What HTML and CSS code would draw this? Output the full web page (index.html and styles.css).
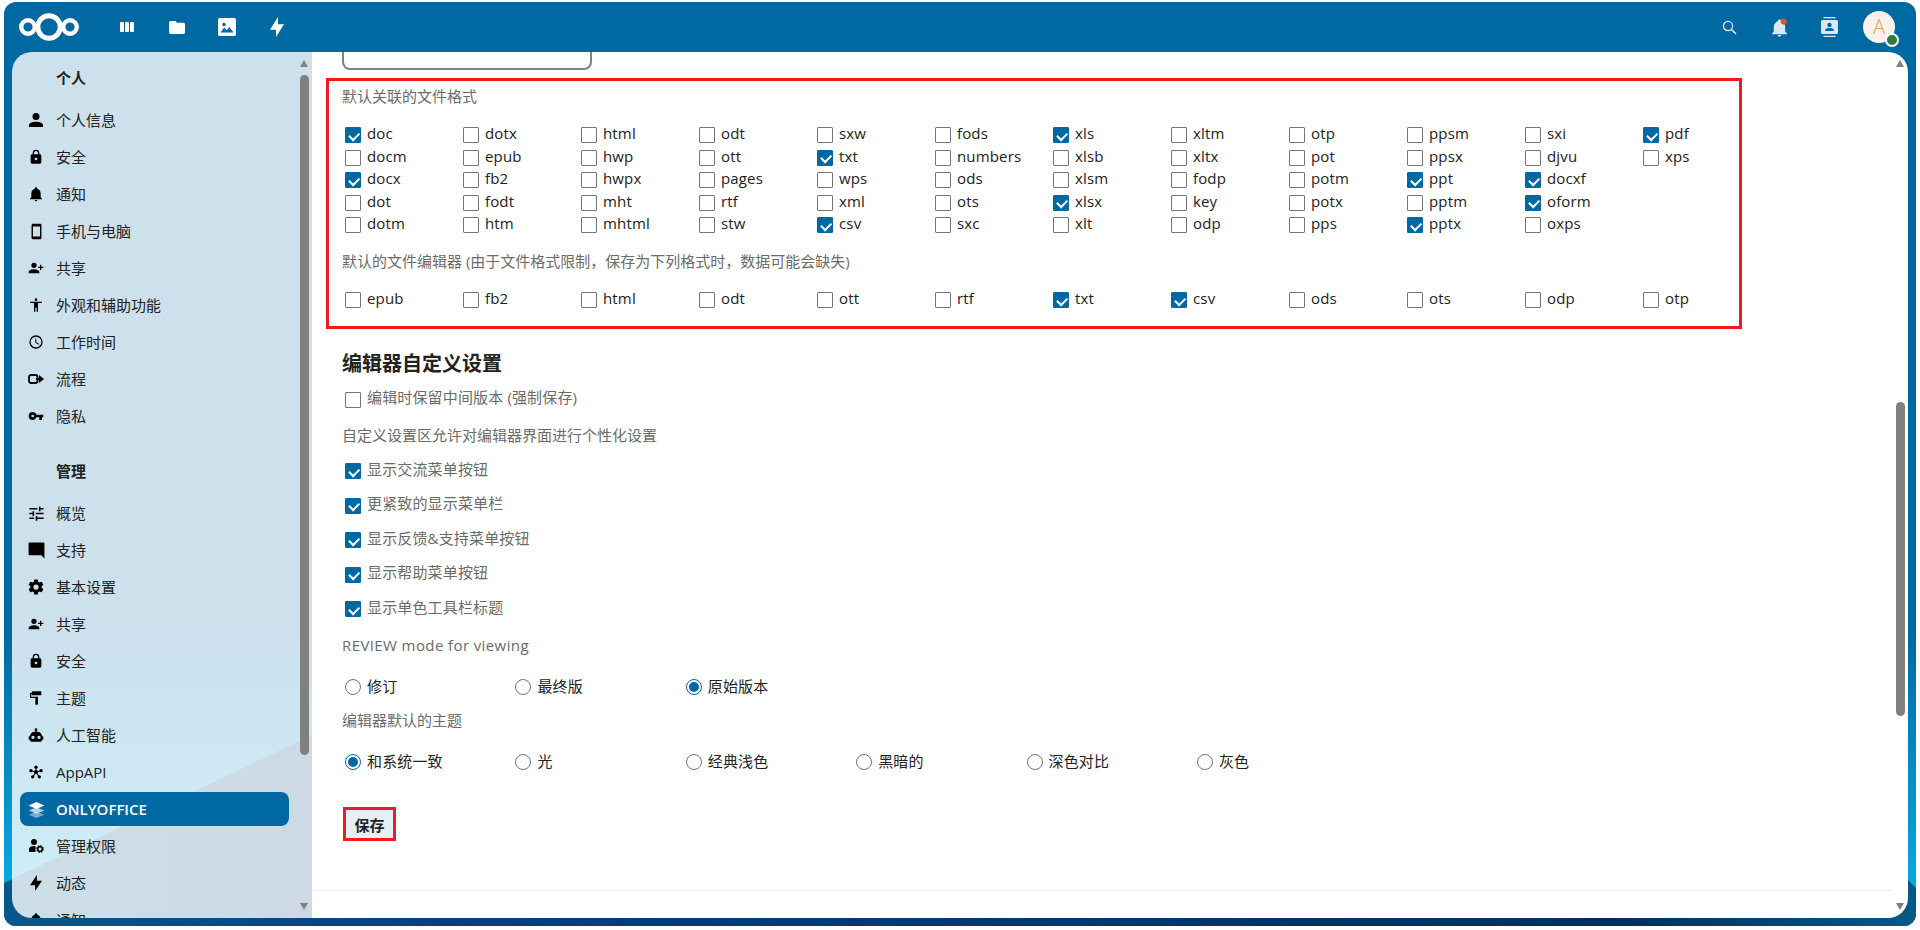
FILE: index.html
```html
<!DOCTYPE html>
<html lang="zh-CN">
<head>
<meta charset="utf-8">
<title>ONLYOFFICE</title>
<link rel="stylesheet" href="styles.css">
</head>
<body>
<div class="frame">
  <header class="topbar">
    <svg class="logo" viewBox="2 1 60 28"><g fill="none" stroke="#fff"><circle cx="32" cy="15" r="11.2" stroke-width="5"/><circle cx="11" cy="15" r="6.8" stroke-width="4.4"/><circle cx="53" cy="15" r="6.8" stroke-width="4.4"/></g></svg>
    <nav class="apps">
      <a class="app"><svg class="a-dash" viewBox="0 0 14 10"><rect x="0" width="4" height="10" rx="1"/><rect x="5" width="4" height="10" rx="1"/><rect x="10" width="4" height="10" rx="1"/></svg></a>
      <a class="app"><svg class="a-folder" viewBox="2 4 20 16"><path d="M10,4H4C2.89,4 2,4.89 2,6V18A2,2 0 0,0 4,20H20A2,2 0 0,0 22,18V8C22,6.89 21.1,6 20,6H12L10,4Z"/></svg></a>
      <a class="app"><svg class="a-photo" viewBox="0 0 18 18"><rect width="18" height="18" rx="1.5"/><circle cx="6" cy="6.5" r="1.7" fill="#0069a2"/><path d="M2.5 14.5 6.3 9.5 8.7 12.3 11.2 9 15.5 14.5Z" fill="#0069a2"/></svg></a>
      <a class="app"><svg class="a-bolt" viewBox="5 1 14 22" preserveAspectRatio="none"><path d="M11 15H5L13 1V9H19L11 23V15Z"/></svg></a>
    </nav>
    <div class="tools">
      <a class="tool"><svg class="t-search" viewBox="0 0 16 16"><circle cx="6.4" cy="6.4" r="4.9" fill="none" stroke="#d9e8f1" stroke-width="1.4"/><path d="M10 10 15 15" stroke="#d9e8f1" stroke-width="1.6" fill="none"/></svg></a>
      <a class="tool"><svg class="t-bell" viewBox="0 0 16 18"><path d="M15 14.5V15.4H1V14.5L2.6 13V8.4C2.6 5.9 4.2 3.7 6.5 3 6.5 2 7.2 1.4 8 1.4S9.5 2 9.5 3C11.8 3.7 13.4 5.9 13.4 8.4V13L15 14.5ZM9.6 16.2A1.6 1.6 0 0 1 6.4 16.2" fill="#d9e8f1"/><circle cx="12" cy="3.4" r="2.9" fill="#e0522a"/></svg></a>
      <a class="tool"><svg class="t-contact" viewBox="0 0 17 20"><path d="M2.5 0H14.5V1.2H2.5ZM2.5 18.8H14.5V20H2.5Z" fill="#d9e8f1"/><rect y="3" width="17" height="14" rx="1.5" fill="#d9e8f1"/><circle cx="8.5" cy="8" r="2.2" fill="#0069a2"/><path d="M4.2 14V13C4.2 11.6 6.5 11 8.5 11S12.8 11.6 12.8 13V14Z" fill="#0069a2"/></svg></a>
      <div class="avatar">A<span class="status"></span></div>
    </div>
  </header>
  <div class="body">
    <aside class="sidebar">
      <nav class="side-nav">
        <h3 class="side-title">个人</h3>
        <ul class="side-list">
          <li class="side-item"><span class="slot"><svg class="i16" viewBox="3 3 18 18"><path d="M12,4A4,4 0 0,1 16,8A4,4 0 0,1 12,12A4,4 0 0,1 8,8A4,4 0 0,1 12,4M12,14C16.42,14 20,15.79 20,18V20H4V18C4,15.79 7.58,14 12,14Z"/></svg></span>个人信息</li>
          <li class="side-item"><span class="slot"><svg class="i16" viewBox="0 0 24 24"><path d="M12,17A2,2 0 0,0 14,15C14,13.89 13.1,13 12,13A2,2 0 0,0 10,15A2,2 0 0,0 12,17M18,8A2,2 0 0,1 20,10V20A2,2 0 0,1 18,22H6A2,2 0 0,1 4,20V10C4,8.89 4.9,8 6,8H7V6A5,5 0 0,1 12,1A5,5 0 0,1 17,6V8H18M12,3A3,3 0 0,0 9,6V8H15V6A3,3 0 0,0 12,3Z"/></svg></span>安全</li>
          <li class="side-item"><span class="slot"><svg class="i16" viewBox="0 0 24 24"><path d="M21,19V20H3V19L5,17V11C5,7.9 7.03,5.17 10,4.29C10,4.19 10,4.1 10,4A2,2 0 0,1 12,2A2,2 0 0,1 14,4C14,4.1 14,4.19 14,4.29C16.97,5.17 19,7.9 19,11V17L21,19M14,21A2,2 0 0,1 12,23A2,2 0 0,1 10,21"/></svg></span>通知</li>
          <li class="side-item"><span class="slot"><svg class="i17" viewBox="0 0 24 24"><path d="M17,19H7V5H17M17,1H7C5.89,1 5,1.89 5,3V21A2,2 0 0,0 7,23H17A2,2 0 0,0 19,21V3C19,1.89 18.1,1 17,1Z"/></svg></span>手机与电脑</li>
          <li class="side-item"><span class="slot"><svg class="i16 flip" viewBox="0 0 24 24"><path d="M15,14C12.33,14 7,15.33 7,18V20H23V18C23,15.33 17.67,14 15,14M6,10V7H4V10H1V12H4V15H6V12H9V10M15,12A4,4 0 0,0 19,8A4,4 0 0,0 15,4A4,4 0 0,0 11,8A4,4 0 0,0 15,12Z"/></svg></span>共享</li>
          <li class="side-item"><span class="slot"><svg class="i16" viewBox="0 0 24 24"><path d="M21,9H15V22H13V16H11V22H9V9H3V7H21M12,2A2,2 0 0,1 14,4A2,2 0 0,1 12,6C10.89,6 10,5.1 10,4C10,2.89 10.89,2 12,2Z"/></svg></span>外观和辅助功能</li>
          <li class="side-item"><span class="slot"><svg class="i16" viewBox="0 0 24 24"><path d="M12,20A8,8 0 0,0 20,12A8,8 0 0,0 12,4A8,8 0 0,0 4,12A8,8 0 0,0 12,20M12,2A10,10 0 0,1 22,12A10,10 0 0,1 12,22C6.47,22 2,17.5 2,12A10,10 0 0,1 12,2M12.5,7V12.25L17,14.92L16.25,16.15L11,13V7H12.5Z"/></svg></span>工作时间</li>
          <li class="side-item"><span class="slot"><svg class="i16" viewBox="0 0 16 16"><rect x="1" y="4" width="8.5" height="8" rx="2" fill="none" stroke="#000" stroke-width="1.8"/><path d="M8 7H11V4L16 8 11 12V9H8Z"/></svg></span>流程</li>
          <li class="side-item"><span class="slot"><svg class="i16" viewBox="0 0 24 24"><path d="M7,14A2,2 0 0,1 5,12A2,2 0 0,1 7,10A2,2 0 0,1 9,12A2,2 0 0,1 7,14M12.65,10C11.83,7.67 9.61,6 7,6A6,6 0 0,0 1,12A6,6 0 0,0 7,18C9.61,18 11.83,16.33 12.65,14H17V18H21V14H23V10H12.65Z"/></svg></span>隐私</li>
        </ul>
        <h3 class="side-title second">管理</h3>
        <ul class="side-list">
          <li class="side-item"><span class="slot"><svg class="i19" viewBox="0 0 24 24"><path d="M3,17V19H9V17H3M3,5V7H13V5H3M13,21V19H21V17H13V15H11V21H13M7,9V11H3V13H7V15H9V9H7M21,13V11H11V13H21M15,9H17V7H21V5H17V3H15V9Z"/></svg></span>概览</li>
          <li class="side-item"><span class="slot"><svg class="i19 flip" viewBox="0 0 24 24"><path d="M21,2H3A1,1 0 0,0 2,3V22L6,18H21A1,1 0 0,0 22,17V3A1,1 0 0,0 21,2Z"/></svg></span>支持</li>
          <li class="side-item"><span class="slot"><svg class="i18" viewBox="0 0 24 24"><path d="M12,15.5A3.5,3.5 0 0,1 8.5,12A3.5,3.5 0 0,1 12,8.5A3.5,3.5 0 0,1 15.5,12A3.5,3.5 0 0,1 12,15.5M19.43,12.97C19.47,12.65 19.5,12.33 19.5,12C19.5,11.67 19.47,11.34 19.43,11L21.54,9.37C21.73,9.22 21.78,8.95 21.66,8.73L19.66,5.27C19.54,5.05 19.27,4.96 19.05,5.05L16.56,6.05C16.04,5.66 15.5,5.32 14.87,5.07L14.5,2.42C14.46,2.18 14.25,2 14,2H10C9.75,2 9.54,2.18 9.5,2.42L9.13,5.07C8.5,5.32 7.96,5.66 7.44,6.05L4.95,5.05C4.73,4.96 4.46,5.05 4.34,5.27L2.34,8.73C2.21,8.95 2.27,9.22 2.46,9.37L4.57,11C4.53,11.34 4.5,11.67 4.5,12C4.5,12.33 4.53,12.65 4.57,12.97L2.46,14.63C2.27,14.78 2.21,15.05 2.34,15.27L4.34,18.73C4.46,18.95 4.73,19.03 4.95,18.95L7.44,17.94C7.96,18.34 8.5,18.68 9.13,18.93L9.5,21.58C9.54,21.82 9.75,22 10,22H14C14.25,22 14.46,21.82 14.5,21.58L14.87,18.93C15.5,18.67 16.04,18.34 16.56,17.94L19.05,18.95C19.27,19.03 19.54,18.95 19.66,18.73L21.66,15.27C21.78,15.05 21.73,14.78 21.54,14.63L19.43,12.97Z"/></svg></span>基本设置</li>
          <li class="side-item"><span class="slot"><svg class="i16 flip" viewBox="0 0 24 24"><path d="M15,14C12.33,14 7,15.33 7,18V20H23V18C23,15.33 17.67,14 15,14M6,10V7H4V10H1V12H4V15H6V12H9V10M15,12A4,4 0 0,0 19,8A4,4 0 0,0 15,4A4,4 0 0,0 11,8A4,4 0 0,0 15,12Z"/></svg></span>共享</li>
          <li class="side-item"><span class="slot"><svg class="i16" viewBox="0 0 24 24"><path d="M12,17A2,2 0 0,0 14,15C14,13.89 13.1,13 12,13A2,2 0 0,0 10,15A2,2 0 0,0 12,17M18,8A2,2 0 0,1 20,10V20A2,2 0 0,1 18,22H6A2,2 0 0,1 4,20V10C4,8.89 4.9,8 6,8H7V6A5,5 0 0,1 12,1A5,5 0 0,1 17,6V8H18M12,3A3,3 0 0,0 9,6V8H15V6A3,3 0 0,0 12,3Z"/></svg></span>安全</li>
          <li class="side-item"><span class="slot"><svg class="i16 flip" viewBox="0 0 24 24"><path d="M18,4V3A1,1 0 0,0 17,2H5A1,1 0 0,0 4,3V7A1,1 0 0,0 5,8H17A1,1 0 0,0 18,7V6H19V10H9V21A1,1 0 0,0 10,22H12A1,1 0 0,0 13,21V12H21V4H18Z"/></svg></span>主题</li>
          <li class="side-item"><span class="slot"><svg class="i16" viewBox="0 0 24 24"><path d="M12,2A2,2 0 0,1 14,4C14,4.74 13.6,5.39 13,5.73V7H14A7,7 0 0,1 21,14H22A1,1 0 0,1 23,15V18A1,1 0 0,1 22,19H21V20A2,2 0 0,1 19,22H5A2,2 0 0,1 3,20V19H2A1,1 0 0,1 1,18V15A1,1 0 0,1 2,14H3A7,7 0 0,1 10,7H11V5.73C10.4,5.39 10,4.74 10,4A2,2 0 0,1 12,2M7.5,13A2.5,2.5 0 0,0 5,15.5A2.5,2.5 0 0,0 7.5,18A2.5,2.5 0 0,0 10,15.5A2.5,2.5 0 0,0 7.5,13M16.5,13A2.5,2.5 0 0,0 14,15.5A2.5,2.5 0 0,0 16.5,18A2.5,2.5 0 0,0 19,15.5A2.5,2.5 0 0,0 16.5,13Z"/></svg></span>人工智能</li>
          <li class="side-item"><span class="slot"><svg class="i14" viewBox="0 0 16 16"><g stroke="#000" stroke-width="1.200"><path d="M8 8 8 3M8 8 2.500 6.500M8 8 13.500 6.500M8 8 4.500 13.500M8 8 11.500 13.500"/></g><circle cx="8" cy="8" r="2.400"/><circle cx="8" cy="2.500" r="1.900"/><circle cx="2.200" cy="6.500" r="1.900"/><circle cx="13.800" cy="6.500" r="1.900"/><circle cx="4.200" cy="13.500" r="1.900"/><circle cx="11.800" cy="13.500" r="1.900"/></svg></span>AppAPI</li>
          <li class="side-item active"><span class="slot"><svg class="i17" viewBox="0 0 16 16"><path d="M8 10.2 .6 13 8 16 15.4 13Z" fill="#fff" opacity=".45"/><path d="M8 6 .6 9 8 12 15.4 9Z" fill="#fff" opacity=".7"/><path d="M8 1 .6 4.3 8 7.6 15.4 4.3Z" fill="#fff"/></svg></span>ONLYOFFICE</li>
          <li class="side-item"><span class="slot"><svg class="i16" viewBox="0 0 16 16"><circle cx="6" cy="4" r="3"/><path d="M1 14V11C1 9 3.5 8 6 8 6.600 8 7 8 7.500 8.200V14Z"/><circle cx="12" cy="11" r="2.300" fill="none" stroke="#000" stroke-width="1.600"/><circle cx="12" cy="11" r="3.500" fill="none" stroke="#000" stroke-width="1" stroke-dasharray="1.500 1.250"/></svg></span>管理权限</li>
          <li class="side-item"><span class="slot"><svg class="i-bolt" viewBox="5 1 14 22" preserveAspectRatio="none"><path d="M11 15H5L13 1V9H19L11 23V15Z"/></svg></span>动态</li>
          <li class="side-item"><span class="slot"><svg class="i16" viewBox="0 0 24 24"><path d="M21,19V20H3V19L5,17V11C5,7.9 7.03,5.17 10,4.29C10,4.19 10,4.1 10,4A2,2 0 0,1 12,2A2,2 0 0,1 14,4C14,4.1 14,4.19 14,4.29C16.97,5.17 19,7.9 19,11V17L21,19M14,21A2,2 0 0,1 12,23A2,2 0 0,1 10,21"/></svg></span>通知</li>
        </ul>
      </nav>
      <div class="rail side-rail">
        <span class="arrow up"></span>
        <span class="thumb"></span>
        <span class="arrow down"></span>
      </div>
    </aside>
    <main class="main">
      <div class="content">
        <div class="clipped-input"></div>
        <section class="marked">
          <p class="muted first">默认关联的文件格式</p>
          <div class="formats">
            <label class="opt"><input type="checkbox" checked>doc</label>
            <label class="opt"><input type="checkbox">docm</label>
            <label class="opt"><input type="checkbox" checked>docx</label>
            <label class="opt"><input type="checkbox">dot</label>
            <label class="opt"><input type="checkbox">dotm</label>
            <label class="opt"><input type="checkbox">dotx</label>
            <label class="opt"><input type="checkbox">epub</label>
            <label class="opt"><input type="checkbox">fb2</label>
            <label class="opt"><input type="checkbox">fodt</label>
            <label class="opt"><input type="checkbox">htm</label>
            <label class="opt"><input type="checkbox">html</label>
            <label class="opt"><input type="checkbox">hwp</label>
            <label class="opt"><input type="checkbox">hwpx</label>
            <label class="opt"><input type="checkbox">mht</label>
            <label class="opt"><input type="checkbox">mhtml</label>
            <label class="opt"><input type="checkbox">odt</label>
            <label class="opt"><input type="checkbox">ott</label>
            <label class="opt"><input type="checkbox">pages</label>
            <label class="opt"><input type="checkbox">rtf</label>
            <label class="opt"><input type="checkbox">stw</label>
            <label class="opt"><input type="checkbox">sxw</label>
            <label class="opt"><input type="checkbox" checked>txt</label>
            <label class="opt"><input type="checkbox">wps</label>
            <label class="opt"><input type="checkbox">xml</label>
            <label class="opt"><input type="checkbox" checked>csv</label>
            <label class="opt"><input type="checkbox">fods</label>
            <label class="opt"><input type="checkbox">numbers</label>
            <label class="opt"><input type="checkbox">ods</label>
            <label class="opt"><input type="checkbox">ots</label>
            <label class="opt"><input type="checkbox">sxc</label>
            <label class="opt"><input type="checkbox" checked>xls</label>
            <label class="opt"><input type="checkbox">xlsb</label>
            <label class="opt"><input type="checkbox">xlsm</label>
            <label class="opt"><input type="checkbox" checked>xlsx</label>
            <label class="opt"><input type="checkbox">xlt</label>
            <label class="opt"><input type="checkbox">xltm</label>
            <label class="opt"><input type="checkbox">xltx</label>
            <label class="opt"><input type="checkbox">fodp</label>
            <label class="opt"><input type="checkbox">key</label>
            <label class="opt"><input type="checkbox">odp</label>
            <label class="opt"><input type="checkbox">otp</label>
            <label class="opt"><input type="checkbox">pot</label>
            <label class="opt"><input type="checkbox">potm</label>
            <label class="opt"><input type="checkbox">potx</label>
            <label class="opt"><input type="checkbox">pps</label>
            <label class="opt"><input type="checkbox">ppsm</label>
            <label class="opt"><input type="checkbox">ppsx</label>
            <label class="opt"><input type="checkbox" checked>ppt</label>
            <label class="opt"><input type="checkbox">pptm</label>
            <label class="opt"><input type="checkbox" checked>pptx</label>
            <label class="opt"><input type="checkbox">sxi</label>
            <label class="opt"><input type="checkbox">djvu</label>
            <label class="opt"><input type="checkbox" checked>docxf</label>
            <label class="opt"><input type="checkbox" checked>oform</label>
            <label class="opt"><input type="checkbox">oxps</label>
            <label class="opt"><input type="checkbox" checked>pdf</label>
            <label class="opt"><input type="checkbox">xps</label>
          </div>
          <p class="muted second-label">默认的文件编辑器 (由于文件格式限制，保存为下列格式时，数据可能会缺失)</p>
          <div class="formats single">
            <label class="opt"><input type="checkbox">epub</label>
            <label class="opt"><input type="checkbox">fb2</label>
            <label class="opt"><input type="checkbox">html</label>
            <label class="opt"><input type="checkbox">odt</label>
            <label class="opt"><input type="checkbox">ott</label>
            <label class="opt"><input type="checkbox">rtf</label>
            <label class="opt"><input type="checkbox" checked>txt</label>
            <label class="opt"><input type="checkbox" checked>csv</label>
            <label class="opt"><input type="checkbox">ods</label>
            <label class="opt"><input type="checkbox">ots</label>
            <label class="opt"><input type="checkbox">odp</label>
            <label class="opt"><input type="checkbox">otp</label>
          </div>
        </section>
        <h2 class="section-title">编辑器自定义设置</h2>
        <label class="opt soft force"><input type="checkbox">编辑时保留中间版本 (强制保存)</label>
        <p class="muted custom-intro">自定义设置区允许对编辑器界面进行个性化设置</p>
        <div class="custom-list">
          <label class="opt soft"><input type="checkbox" checked>显示交流菜单按钮</label>
          <label class="opt soft"><input type="checkbox" checked>更紧致的显示菜单栏</label>
          <label class="opt soft"><input type="checkbox" checked>显示反馈&amp;支持菜单按钮</label>
          <label class="opt soft"><input type="checkbox" checked>显示帮助菜单按钮</label>
          <label class="opt soft"><input type="checkbox" checked>显示单色工具栏标题</label>
        </div>
        <p class="muted review-label">REVIEW mode for viewing</p>
        <div class="radios">
          <label class="opt"><input type="radio" name="review">修订</label>
          <label class="opt"><input type="radio" name="review">最终版</label>
          <label class="opt"><input type="radio" name="review" checked>原始版本</label>
        </div>
        <p class="muted theme-label">编辑器默认的主题</p>
        <div class="radios">
          <label class="opt"><input type="radio" name="theme" checked>和系统一致</label>
          <label class="opt"><input type="radio" name="theme">光</label>
          <label class="opt"><input type="radio" name="theme">经典浅色</label>
          <label class="opt"><input type="radio" name="theme">黑暗的</label>
          <label class="opt"><input type="radio" name="theme">深色对比</label>
          <label class="opt"><input type="radio" name="theme">灰色</label>
        </div>
        <button class="save" type="button">保存</button>
        <hr class="divider">
      </div>
      <div class="rail main-rail">
        <span class="arrow up"></span>
        <span class="thumb"></span>
        <span class="arrow down"></span>
      </div>
    </main>
  </div>
</div>
</body>
</html>
```

FILE: styles.css
```css
* { box-sizing: border-box; }
html, body { height: 100%; }
body {
  margin: 0;
  padding: 2px 4px 4px;
  background: #fff;
  overflow: hidden;
  font-family: "Open Sans", "Noto Sans CJK SC", sans-serif;
  font-size: 15px;
  line-height: 22.5px;
  color: #222;
}
.frame {
  position: relative;
  isolation: isolate;
  height: 924px;
  display: flex;
  flex-direction: column;
  border-radius: 12px;
  overflow: hidden;
  background: linear-gradient(to bottom, #0069a2 0, #0069a2 68%, #0aa7df 95%);
}
.frame::before {
  content: "";
  position: absolute;
  inset: 0;
  z-index: -1;
  background: linear-gradient(to right, #05588a 0, #0a3d80 25%, #01305f 85%, #055a8a 100%);
  clip-path: polygon(0 881px, 308px 733px, 1500px 733px, 1904px 878px, 1912px 886px, 1912px 924px, 0 924px);
}

/* top bar */
.topbar { flex: 0 0 50px; display: flex; align-items: center; padding: 0 8px 0 15px; }
.logo { width: 60px; height: 28px; display: block; }
.apps { display: flex; align-items: center; margin-left: 23px; }
.app { width: 50px; height: 50px; display: flex; align-items: center; justify-content: center; }
.app svg { fill: #fff; display: block; }
.a-dash { width: 14px; height: 10px; }
.a-folder { width: 16px; height: 13px; }
.a-photo { width: 18px; height: 18px; }
.a-bolt { width: 14px; height: 20px; }
.tools { margin-left: auto; display: flex; align-items: center; padding-right: 13px; }
.tool { width: 50px; height: 50px; display: flex; align-items: center; justify-content: center; }
.t-search { width: 15px; height: 15px; }
.t-bell { width: 17px; height: 19px; }
.t-contact { width: 17px; height: 20px; }
.avatar {
  position: relative;
  width: 32px; height: 32px;
  margin-left: 9px;
  border-radius: 50%;
  background: #f8f1ec;
  color: #d9a273;
  font-size: 20px;
  font-weight: 300;
  line-height: 32px;
  text-align: center;
}
.status {
  position: absolute;
  right: -4px; bottom: -4px;
  width: 14px; height: 14px;
  border-radius: 50%;
  background: #2d7b41;
  border: 2px solid #fff;
}

/* body */
.body { flex: 1; min-height: 0; display: flex; padding: 0 8px 8px; }
.sidebar {
  flex: 0 0 300px;
  display: flex;
  overflow: hidden;
  border-radius: 20px 0 0 20px;
  background: rgba(255, 255, 255, .8);
}
.side-nav { flex: 1; min-width: 0; padding-top: 6px; overflow: hidden; }
.side-title {
  margin: 0 0 5px;
  height: 40px;
  padding-left: 44px;
  font-size: 15px;
  font-weight: 700;
  line-height: 40px;
  color: #222;
}
.side-title.second { margin-top: 18px; margin-bottom: 5px; }
.side-list { list-style: none; margin: 0; padding: 0 11px 0 8px; display: flex; flex-direction: column; gap: 3px; }
.side-item {
  flex: 0 0 34px;
  height: 34px;
  display: flex;
  align-items: center;
  gap: 10px;
  padding-left: 6px;
  border-radius: 8px;
  white-space: nowrap;
}
.side-item.active { background: #0069a2; color: #fff; font-weight: 600; }
.slot { flex: 0 0 20px; display: flex; align-items: center; justify-content: center; }
.slot svg { display: block; fill: #000; }
.i14 { width: 14px; height: 14px; }
.i16 { width: 16px; height: 16px; }
.i17 { width: 17px; height: 17px; }
.i18 { width: 18px; height: 18px; }
.i19 { width: 19px; height: 19px; }
.i-bolt { width: 12px; height: 16px; }
.flip { transform: scaleX(-1); }
.active .slot svg { fill: #fff; }

/* fake scrollbars */
.rail { flex: 0 0 9px; width: 9px; display: flex; flex-direction: column; }
.side-rail { margin-right: 3px; }
.main-rail { margin: 0 3px; }
.arrow { flex: 0 0 auto; width: 0; height: 0; border-left: 4.5px solid transparent; border-right: 4.5px solid transparent; }
.arrow.up { margin-top: 8px; border-bottom: 7px solid #808080; }
.arrow.down { margin-top: auto; margin-bottom: 8px; border-top: 7px solid #808080; }
.thumb { display: block; width: 9px; border-radius: 5px; background: #808080; }
.side-rail .thumb { margin-top: 8px; height: 680px; }
.main-rail .thumb { margin-top: 335px; height: 314px; }

/* main */
.main { flex: 1; min-width: 0; display: flex; background: #fff; border-radius: 0 20px 20px 0; overflow: hidden; }
.content { flex: 1; min-width: 0; padding-left: 30px; overflow: hidden; }
.clipped-input { width: 250px; height: 18px; border: 2px solid #808080; border-top: 0; border-radius: 0 0 8px 8px; }
p { margin: 0; }
.muted { color: #6b6b6b; }
.marked { width: 1416px; margin: 8px 0 0 -16px; padding: 4px 0 16.75px 13px; border: 3px solid #ed1c24; }
.formats {
  margin-top: 14.5px;
  display: grid;
  grid-template-rows: repeat(5, 22.5px);
  grid-auto-flow: column;
  grid-auto-columns: 118px;
}
.formats.single { grid-template-rows: 22.5px; margin-top: 14.5px; }
.second-label { margin-top: 15.5px; }
.opt { display: flex; align-items: center; gap: 6px; height: 22.5px; white-space: nowrap; padding-left: 3px; letter-spacing: .15px; }
.opt.soft { color: #6b6b6b; }
input[type="checkbox"], input[type="radio"] {
  appearance: none;
  flex: 0 0 16px;
  position: relative;
  width: 16px; height: 16px;
  margin: 0;
  border: 1px solid #767676;
  background: #fff;
}
input[type="checkbox"] { top: 2px; border-radius: 1px; }
input[type="checkbox"]:checked { background: #0069a2; border-color: #0069a2; }
input[type="checkbox"]:checked::after {
  content: "";
  position: absolute;
  left: 3px; top: 3.5px;
  width: 8px; height: 4.5px;
  border-left: 2px solid #fff;
  border-bottom: 2px solid #fff;
  transform: rotate(-45deg);
}
input[type="radio"] { top: 1px; border-radius: 50%; }
input[type="radio"]:checked { border-color: #0069a2; }
input[type="radio"]:checked::after {
  content: "";
  position: absolute;
  inset: 2px;
  border-radius: 50%;
  background: #0069a2;
}
.section-title { margin: 20px 0 0; font-size: 20px; font-weight: 700; line-height: 30px; color: #222; }
.force { margin-top: 7px; }
.custom-intro { margin-top: 15.5px; }
.custom-list { margin-top: 11px; display: flex; flex-direction: column; gap: 12px; }
.review-label { margin-top: 15.9px; letter-spacing: .4px; }
.radios { margin-top: 18.5px; display: grid; grid-template-columns: repeat(6, 170.4px); }
.theme-label { margin-top: 11.5px; }
.save {
  display: block;
  margin: 34.75px 0 0 1px;
  width: 53px; height: 34px;
  padding: 0;
  border: 3px solid #ed1c24;
  background: #e7eff6;
  font: 700 15px "Open Sans", "Noto Sans CJK SC", sans-serif;
  color: #222;
}
.divider { margin: 49px 0 0 -30px; border: 0; border-top: 1px solid #ededed; }
```
